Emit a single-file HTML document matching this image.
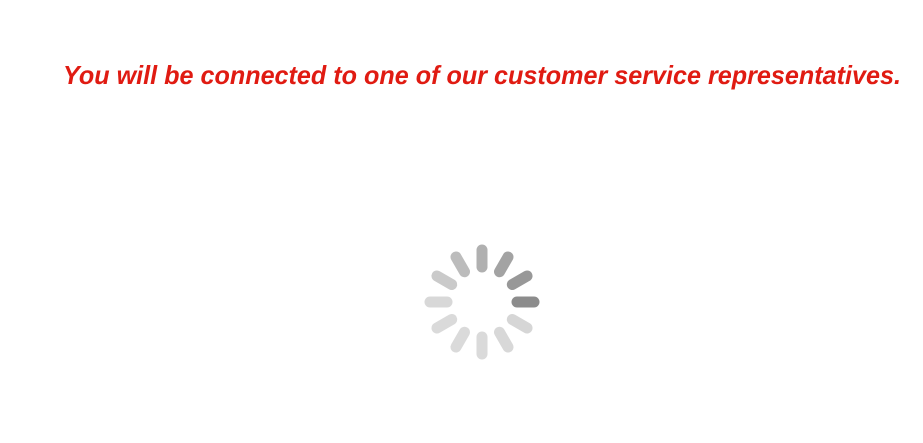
<!DOCTYPE html>
<html><head><style>html,body{margin:0;padding:0;background:#fff;width:923px;height:443px;overflow:hidden}</style></head>
<body>
<svg width="923" height="443" xmlns="http://www.w3.org/2000/svg">
<text x="63" y="84" textLength="838" lengthAdjust="spacingAndGlyphs" font-family="Liberation Sans, sans-serif" font-weight="bold" font-style="italic" font-size="26" fill="#e01b12">You will be connected to one of our customer service representatives.</text>
<g transform="translate(482,302)" stroke-width="11" stroke-linecap="round">
<line x1="35" y1="0" x2="52" y2="0" stroke="#8c8c8c" transform="rotate(0)"/>
<line x1="35" y1="0" x2="52" y2="0" stroke="#989898" transform="rotate(-30)"/>
<line x1="35" y1="0" x2="52" y2="0" stroke="#a3a3a3" transform="rotate(-60)"/>
<line x1="35" y1="0" x2="52" y2="0" stroke="#b0b0b0" transform="rotate(-90)"/>
<line x1="35" y1="0" x2="52" y2="0" stroke="#bcbcbc" transform="rotate(-120)"/>
<line x1="35" y1="0" x2="52" y2="0" stroke="#cacaca" transform="rotate(-150)"/>
<line x1="35" y1="0" x2="52" y2="0" stroke="#d8d8d8" transform="rotate(180)"/>
<line x1="35" y1="0" x2="52" y2="0" stroke="#dadada" transform="rotate(150)"/>
<line x1="35" y1="0" x2="52" y2="0" stroke="#dadada" transform="rotate(120)"/>
<line x1="35" y1="0" x2="52" y2="0" stroke="#dadada" transform="rotate(90)"/>
<line x1="35" y1="0" x2="52" y2="0" stroke="#d8d8d8" transform="rotate(60)"/>
<line x1="35" y1="0" x2="52" y2="0" stroke="#d6d6d6" transform="rotate(30)"/>
</g>
</svg>
</body></html>
